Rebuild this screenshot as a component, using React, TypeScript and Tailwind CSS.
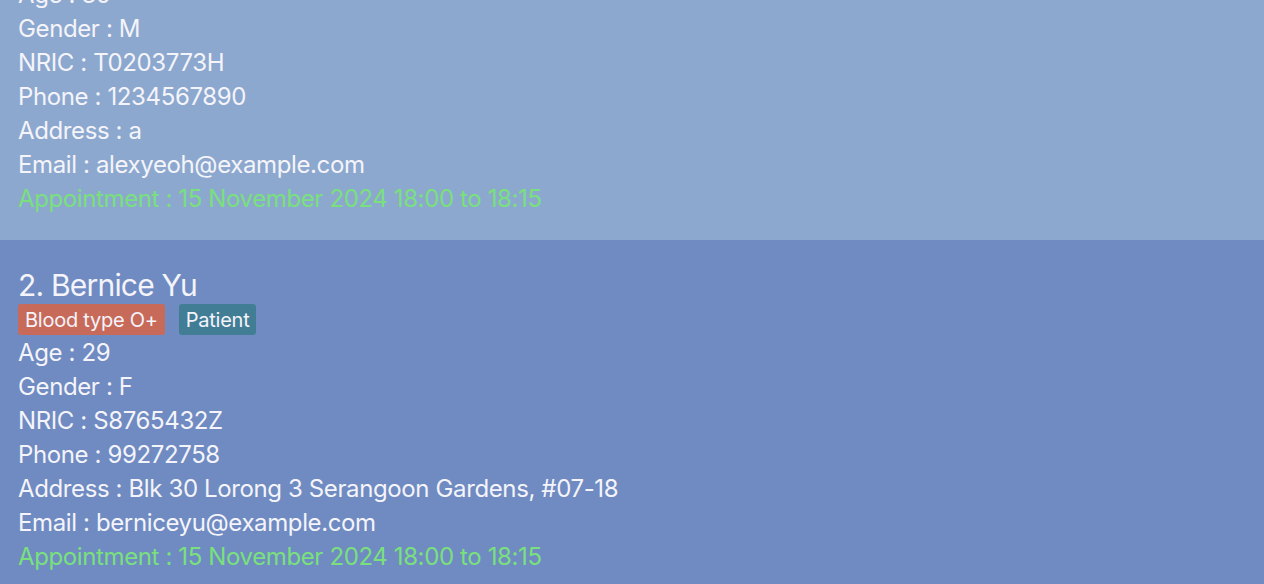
import React from "react";

type Person = {
  idx: number;
  name: string;
  tags: { label: string; cls: string }[];
  age: string;
  gender: string;
  nric: string;
  phone: string;
  address: string;
  email: string;
  appt: string;
  bg: string;
};

const people: Person[] = [
  {
    idx: 1,
    name: "Alex Yeoh",
    tags: [
      { label: "Blood type A+", cls: "bg-[#c86a5a]" },
      { label: "Patient", cls: "bg-[#427d96]" },
    ],
    age: "30",
    gender: "M",
    nric: "T0203773H",
    phone: "1234567890",
    address: "a",
    email: "alexyeoh@example.com",
    appt: "15 November 2024 18:00 to 18:15",
    bg: "bg-[#8ca8ce]",
  },
  {
    idx: 2,
    name: "Bernice Yu",
    tags: [
      { label: "Blood type O+", cls: "bg-[#c86a5a]" },
      { label: "Patient", cls: "bg-[#427d96]" },
    ],
    age: "29",
    gender: "F",
    nric: "S8765432Z",
    phone: "99272758",
    address: "Blk 30 Lorong 3 Serangoon Gardens, #07-18",
    email: "berniceyu@example.com",
    appt: "15 November 2024 18:00 to 18:15",
    bg: "bg-[#6f8bc1]",
  },
];

function Card({ p }: { p: Person }) {
  return (
    <div className={`${p.bg} pl-[18px] pt-[26px] pb-[24px] text-[#f4f4fa]`}>
      <div className="text-[30px] leading-[38px] tracking-[-0.8px]">
        {p.idx}. {p.name}
      </div>
      <div className="flex gap-[14px] h-[32px] items-start">
        {p.tags.map((t) => (
          <span
            key={t.label}
            className={`${t.cls} rounded-[3px] h-[31px] px-[7px] text-[20px] leading-[32px] tracking-[-0.25px]`}
          >
            {t.label}
          </span>
        ))}
      </div>
      <div className="text-[24px] leading-[34px] tracking-[-0.38px]">
        <div>Age : {p.age}</div>
        <div>Gender : {p.gender}</div>
        <div>NRIC : {p.nric}</div>
        <div>Phone : {p.phone}</div>
        <div>Address : {p.address}</div>
        <div>Email : {p.email}</div>
        <div className="text-[#79e07d]">Appointment : {p.appt}</div>
      </div>
    </div>
  );
}

export default function App() {
  return (
    <div
      className="h-[584px] w-[1264px] overflow-hidden bg-[#6f8bc1]"
      style={{ fontFamily: "Inter, 'Noto Sans', sans-serif" }}
    >
      <div className="-mt-[118px]">
        {people.map((p) => (
          <Card key={p.idx} p={p} />
        ))}
      </div>
    </div>
  );
}
